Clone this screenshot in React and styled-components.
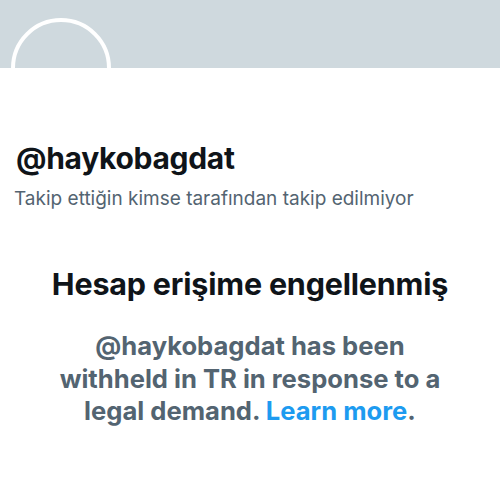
import styled, { createGlobalStyle } from 'styled-components'

const GlobalStyle = createGlobalStyle`
    body {
        margin: 0;
        background: #fff;
        font-family: Inter, "Noto Sans", "Liberation Sans", sans-serif;
        color: #0f1419;
    }
`

const Page = styled.div`
    width: 500px;
    height: 483px;
    overflow: hidden;
    background: #fff;
`

const Banner = styled.div`
    height: 68px;
    background: #cfd9de;
`

const Avatar = styled.div`
    width: 92px;
    height: 92px;
    margin: -50px 0 0 11px;
    border: 4px solid #fff;
    border-radius: 50%;
    background: transparent;
`

const Profile = styled.div`
    padding: 0 14px;
    margin-top: 22px;
`

const Handle = styled.h2`
    margin: 0 0 0 2px;
    font-size: 30px;
    font-weight: 700;
    line-height: 36px;
    letter-spacing: -0.3px;
`

const FollowNote = styled.p`
    margin: 11px 0 0;
    font-size: 19px;
    line-height: 24px;
    color: #536471;
`

const Notice = styled.section`
    display: flex;
    flex-direction: column;
    align-items: center;
    text-align: center;
    padding: 0 36px;
    margin-top: 55px;
`

const NoticeTitle = styled.h1`
    margin: 0;
    font-size: 30.5px;
    font-weight: 700;
    line-height: 36px;
    letter-spacing: -0.2px;
`

const NoticeBody = styled.p`
    margin: 28px 0 0;
    max-width: 410px;
    font-size: 25.6px;
    font-weight: 700;
    line-height: 32.5px;
    color: #536471;
`

const Link = styled.a`
    color: #1d9bf0;
    text-decoration: none;
`

function App() {
    return (
        <Page>
            <GlobalStyle />
            <Banner />
            <Avatar />
            <Profile>
                <Handle>@haykobagdat</Handle>
                <FollowNote>Takip ettiğin kimse tarafından takip edilmiyor</FollowNote>
            </Profile>
            <Notice>
                <NoticeTitle>Hesap erişime engellenmiş</NoticeTitle>
                <NoticeBody>
                    @haykobagdat has been withheld in TR in response to a legal demand.{' '}
                    <Link href="#">Learn more</Link>.
                </NoticeBody>
            </Notice>
        </Page>
    )
}

export default App
